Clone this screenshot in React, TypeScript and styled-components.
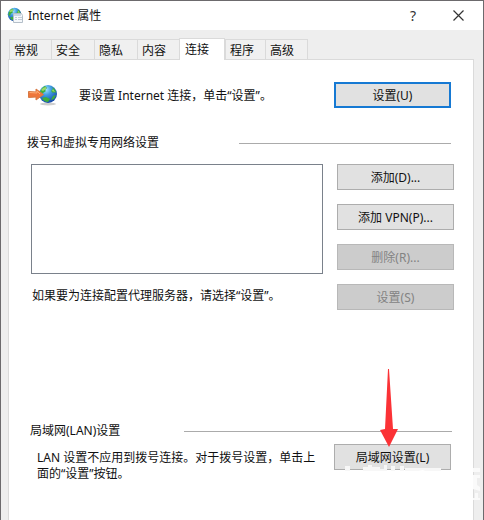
import React from "react";
import styled, { createGlobalStyle, css } from "styled-components";

const GlobalStyle = createGlobalStyle`
  *, *::before, *::after { box-sizing: border-box; }
  body {
    margin: 0;
    background: #eeeeee;
    color: #111111;
    font-family: "Noto Sans", "Noto Sans CJK SC", sans-serif;
    font-size: 12px;
    line-height: 16px;
  }
`;

const Dialog = styled.main`
  display: flex;
  flex-direction: column;
  min-height: 100vh;
  border: 1px solid #6c6a6d;
  border-bottom: 0;
  background: #eeeeee;
`;

const TitleBar = styled.header`
  display: flex;
  align-items: center;
  height: 29px;
  padding: 0 17px 0 6px;
  background: #ffffff;
`;

const Title = styled.h1`
  flex: 1;
  margin: 0 0 0 4px;
  font-size: 12px;
  font-weight: 400;
`;

const CaptionButton = styled.button`
  display: grid;
  place-items: center;
  width: 16px;
  height: 20px;
  margin-left: 29px;
  padding: 0;
  border: 0;
  background: transparent;
  color: #333333;
  font: inherit;
  font-size: 14px;
`;

const TabBar = styled.div`
  display: flex;
  align-items: flex-end;
  height: 29px;
  padding-left: 8px;
`;

const Tab = styled.button<{ $active?: boolean; $width: number }>`
  flex: 0 0 ${(p) => p.$width}px;
  height: 20px;
  padding: 2px 0 0 4px;
  border: 1px solid #dadada;
  border-bottom: 0;
  border-right-width: 0;
  background: #f0f0f0;
  color: inherit;
  font: inherit;
  text-align: left;
  &:last-child { border-right-width: 1px; }
  ${(p) =>
    p.$active &&
    css`
      z-index: 1;
      height: 22px;
      margin-bottom: -1px;
      padding: 0 0 0 5px;
      border-right-width: 1px;
      background: #ffffff;
    `}
`;

const Panel = styled.section`
  flex: 1;
  margin: 0 9px 0 7px;
  padding: 22px 19px 0 19px;
  border: 1px solid #dadada;
  border-bottom: 0;
  background: #ffffff;
`;

const SetupRow = styled.div`
  display: flex;
  align-items: center;
  padding-right: 3px;
`;

const SetupText = styled.p`
  flex: 1;
  margin: 2px 0 0 20px;
`;

const PushButton = styled.button<{ $primary?: boolean }>`
  flex: none;
  width: 117px;
  height: 26px;
  padding: 2px 0 0;
  border: ${(p) => (p.$primary ? "2px solid #1679d3" : "1px solid #adadad")};
  background: #e1e1e1;
  color: inherit;
  font: inherit;
  &:disabled {
    border-color: #b8b8b8;
    background: #cccccc;
    color: #838383;
  }
`;

const GroupTitle = styled.h2<{ $lan?: boolean }>`
  display: flex;
  align-items: center;
  gap: ${(p) => (p.$lan ? 64 : 80)}px;
  margin: ${(p) => (p.$lan ? "113px 2px 0 2px" : "27px 3px 0 -1px")};
  font-size: 12px;
  font-weight: 400;
  &::after {
    content: "";
    flex: 1;
    height: 1px;
    background: #ababab;
  }
`;

const Connections = styled.div`
  display: flex;
  gap: 14px;
  margin: 13px 0 0 3px;
`;

const ListColumn = styled.div`
  flex: 1;
  min-width: 0;
`;

const ListBox = styled.div`
  height: 110px;
  border: 1px solid #7a818b;
  background: #ffffff;
`;

const ListHint = styled.p`
  margin: 14px 0 0 1px;
`;

const ButtonColumn = styled.div`
  display: flex;
  flex-direction: column;
  gap: 14px;
`;

const LanRow = styled.div`
  display: flex;
  align-items: flex-start;
  gap: 12px;
  margin: 5px 3px 0 9px;
`;

const LanText = styled.p`
  flex: 1;
  margin: 6px 0 0;
`;

const LanAction = styled.div`
  position: relative;
  flex: none;
`;

const Pointer = styled.svg`
  position: absolute;
  left: 46px;
  bottom: 23px;
  pointer-events: none;
`;

const Watermark = styled.svg`
  position: absolute;
  left: 0;
  top: 20px;
  overflow: visible;
  pointer-events: none;
`;

function Globe({ id }: { id: string }) {
  return (
    <>
      <defs>
        <radialGradient id={id} cx="38%" cy="25%" r="75%">
          <stop offset="0" stopColor="#a9e7ff" />
          <stop offset="0.4" stopColor="#3f9de2" />
          <stop offset="1" stopColor="#174aa8" />
        </radialGradient>
      </defs>
      <circle cx="10" cy="10" r="9" fill={`url(#${id})`} />
      <path d="M2 8Q4 3 7 2L9 4L7 6L8 7L5 9L4 12L2 11ZM14 3Q18 5 18 9L16 8L15 9L13 7L15 5ZM4 14L8 13L12 15L10 18Q6 18 4 14ZM15 12L18 11L16 15L13 16Z" fill="#3eae3c" />
      <path d="M3 6Q5 3 8 3L8 5L5 7ZM15 5L17 8L14 7Z" fill="#9bd869" />
    </>
  );
}

function InternetIcon() {
  return (
    <svg width="17" height="17" viewBox="0 0 17 17" aria-hidden="true">
      <g transform="scale(.75)"><Globe id="titleGlobe" /></g>
      <path d="M6.500 6.500h8l1 2v7h-9z" fill="#f5f8fb" stroke="#b4bfc9" />
      <path d="M7 7h7v2H7z" fill="#cbd9e5" />
      <path d="M8 10h2v1H8zm3 0h4v1h-4zm-3 2h2v1H8zm3 0h4v1h-4z" fill="#c3ced9" />
    </svg>
  );
}

function ConnectIcon() {
  return (
    <svg width="31" height="22" viewBox="0 0 31 22" aria-hidden="true">
      <ellipse cx="20" cy="20" rx="8" ry="1.500" fill="#b9b9b9" opacity=".7" />
      <g transform="translate(10 0)"><Globe id="connectGlobe" /></g>
      <path d="M.5 7.500L8 8V5L15.500 10.500L8 16v-3l-7.500.500z" fill="#ee763b" stroke="#d77943" strokeLinejoin="round" />
      <path d="M1.500 8.500L9 9V7l3 3" fill="none" stroke="#ffac73" />
    </svg>
  );
}

const tabs = [
  { label: "常规", width: 42 },
  { label: "安全", width: 43 },
  { label: "隐私", width: 43 },
  { label: "内容", width: 42 },
  { label: "连接", width: 46, active: true },
  { label: "程序", width: 40 },
  { label: "高级", width: 43 },
];

export default function App() {
  return (
    <>
      <GlobalStyle />
      <Dialog lang="zh-CN">
        <TitleBar>
          <InternetIcon />
          <Title>Internet 属性</Title>
          <CaptionButton aria-label="帮助">?</CaptionButton>
          <CaptionButton aria-label="关闭">
            <svg width="11" height="11" viewBox="0 0 11 11" aria-hidden="true">
              <path d="M.5 .5l10 10M10.500 .5l-10 10" stroke="#333" strokeWidth="1.200" />
            </svg>
          </CaptionButton>
        </TitleBar>
        <TabBar role="tablist">
          {tabs.map((tab) => (
            <Tab key={tab.label} role="tab" aria-selected={!!tab.active} $active={tab.active} $width={tab.width}>
              {tab.label}
            </Tab>
          ))}
        </TabBar>
        <Panel role="tabpanel">
          <SetupRow>
            <ConnectIcon />
            <SetupText>要设置 Internet 连接，单击“设置”。</SetupText>
            <PushButton $primary>设置(U)</PushButton>
          </SetupRow>
          <GroupTitle>拨号和虚拟专用网络设置</GroupTitle>
          <Connections>
            <ListColumn>
              <ListBox role="listbox" aria-label="拨号和虚拟专用网络设置" tabIndex={0} />
              <ListHint>如果要为连接配置代理服务器，请选择“设置”。</ListHint>
            </ListColumn>
            <ButtonColumn>
              <PushButton>添加(D)...</PushButton>
              <PushButton>添加 VPN(P)...</PushButton>
              <PushButton disabled>删除(R)...</PushButton>
              <PushButton disabled>设置(S)</PushButton>
            </ButtonColumn>
          </Connections>
          <GroupTitle $lan>局域网(LAN)设置</GroupTitle>
          <LanRow>
            <LanText>LAN 设置不应用到拨号连接。对于拨号设置，单击上面的“设置”按钮。</LanText>
            <LanAction>
              <PushButton>局域网设置(L)</PushButton>
              <Watermark width="150" height="36" viewBox="0 0 150 36" aria-hidden="true">
                <path d="M11 2h5v5h-5zM29 3h5V1h4v2h8v2h4V1h3v6H29zM57 2h4v5h-4zM66 2h4v5h-4zM71 4h36v3H91l-2-1-5 1H71z" fill="#f7f7f7" />
                <path d="M139 4h7v4h-7zM139 11h7v3h-3v7l3 2v4l-7-2zM139 34h2v-5h3v5h2v2h-7z" fill="#fafafa" />
              </Watermark>
              <Pointer width="18" height="78" viewBox="0 0 18 78" aria-hidden="true">
                <path d="M9 0L13 60L18 60L9 78L0 61L5 60L8 0Z" fill="#fb3236" />
              </Pointer>
            </LanAction>
          </LanRow>
        </Panel>
      </Dialog>
    </>
  );
}
